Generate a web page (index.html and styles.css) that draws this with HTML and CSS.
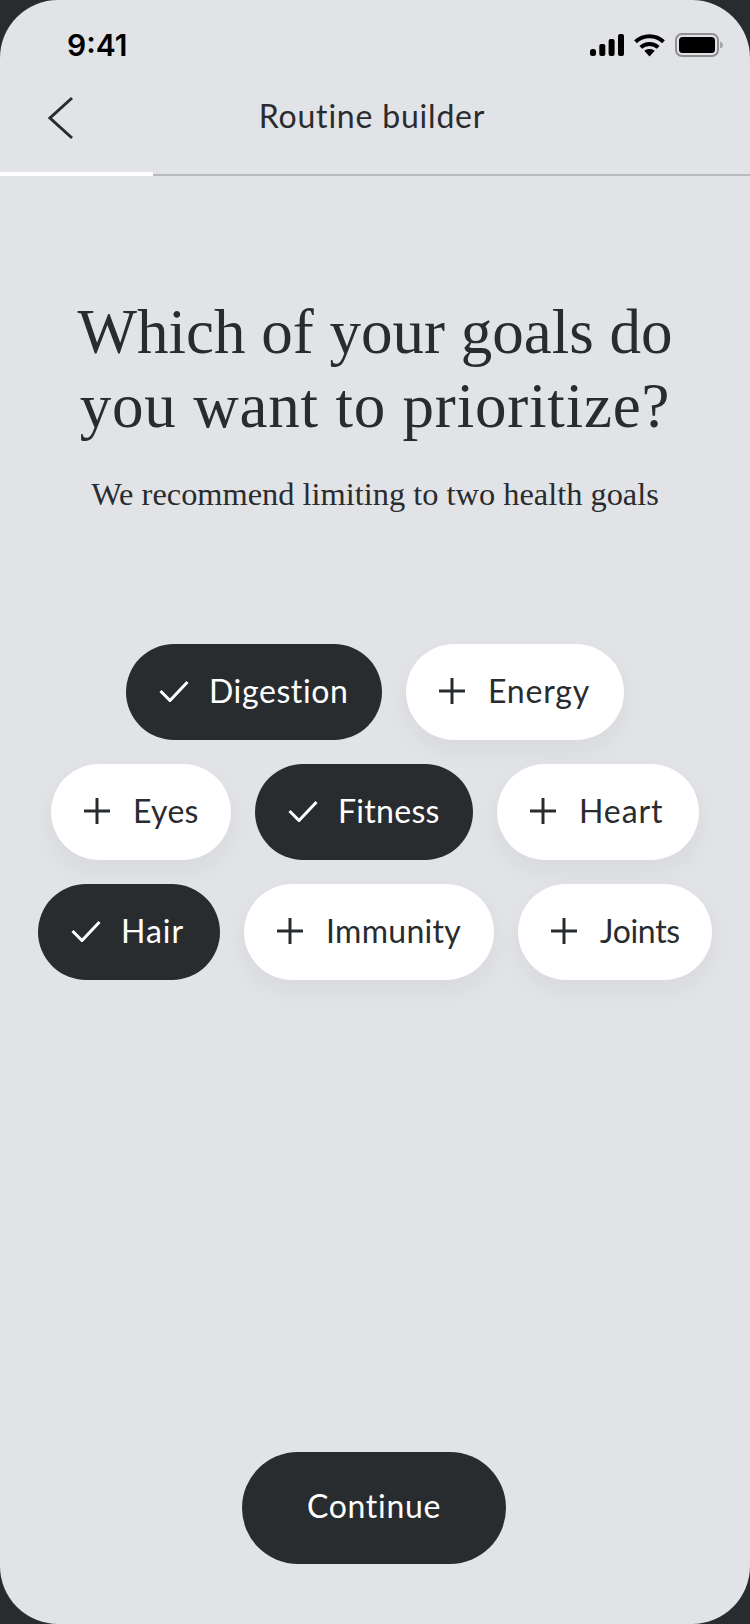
FILE: index.html
```html
<!DOCTYPE html>
<html lang="en">
<head>
  <meta charset="UTF-8" />
  <meta name="viewport" content="width=device-width, initial-scale=1.0" />
  <title>Routine builder</title>
  <link rel="stylesheet" href="styles.css">
</head>
<body>
  <div class="screen">
    <div class="status-bar">
      <span class="time">9:41</span>
      <div class="status-icons">
        <svg class="signal" width="34" height="22" viewBox="0 0 34 22">
          <rect x="0" y="15" width="6" height="7" rx="2.500" />
          <rect x="9.300" y="10" width="6" height="12" rx="2" />
          <rect x="18.600" y="5" width="6" height="17" rx="2" />
          <rect x="28" y="0" width="6" height="22" rx="2" />
        </svg>
        <svg class="wifi" width="31" height="24" viewBox="0 0 31 24">
          <path d="M15.500 23.500 10.300 17.800C13.100 15.400 17.900 15.400 20.700 17.800Z" />
          <path d="M1.500 8.800C9.300 1.400 21.700 1.400 29.500 8.800" fill="none" stroke="#000" stroke-width="4" />
          <path d="M6.800 14.400C11.600 9.800 19.400 9.800 24.200 14.400" fill="none" stroke="#000" stroke-width="4" />
        </svg>
        <svg class="battery" width="48" height="24" viewBox="0 0 48 24">
          <rect x="1" y="1" width="42" height="22" rx="6" fill="none" stroke="#8e8f92" stroke-width="2" />
          <rect x="4" y="4" width="36" height="16" rx="3.500" />
          <path d="M45 8.500C47 9 48 10.500 48 12S47 15 45 15.500Z" fill="#a5a6a9" />
        </svg>
      </div>
    </div>

    <header class="nav">
      <svg class="back" width="26" height="44" viewBox="0 0 26 44">
        <path d="M24 2 2 22 24 42" />
      </svg>
      <h1 class="nav-title">Routine builder</h1>
    </header>
    <div class="progress"><div class="progress-fill"></div></div>

    <main class="content">
      <h2 class="question">Which of your goals do<br><span class="question-end">you want to prioritize?</span></h2>
      <p class="hint">We recommend limiting to two health goals</p>

      <div class="goals">
        <div class="goal-row">
          <button class="pill on digestion"><svg class="tick" viewBox="0 0 30 22"><path d="M1.500 11 11 20.500 28.500 2" /></svg>Digestion</button>
          <button class="pill energy"><svg class="plus" viewBox="0 0 26 26"><path d="M13 0V26M0 13H26" /></svg>Energy</button>
        </div>
        <div class="goal-row">
          <button class="pill eyes"><svg class="plus" viewBox="0 0 26 26"><path d="M13 0V26M0 13H26" /></svg>Eyes</button>
          <button class="pill on fitness"><svg class="tick" viewBox="0 0 30 22"><path d="M1.500 11 11 20.500 28.500 2" /></svg>Fitness</button>
          <button class="pill heart"><svg class="plus" viewBox="0 0 26 26"><path d="M13 0V26M0 13H26" /></svg>Heart</button>
        </div>
        <div class="goal-row">
          <button class="pill on hair"><svg class="tick" viewBox="0 0 30 22"><path d="M1.500 11 11 20.500 28.500 2" /></svg>Hair</button>
          <button class="pill immunity"><svg class="plus" viewBox="0 0 26 26"><path d="M13 0V26M0 13H26" /></svg>Immunity</button>
          <button class="pill joints"><svg class="plus" viewBox="0 0 26 26"><path d="M13 0V26M0 13H26" /></svg>Joints</button>
        </div>
      </div>
    </main>

    <div class="footer">
      <button class="continue">Continue</button>
    </div>
  </div>
</body>
</html>
```

FILE: styles.css
```css
html, body {
  margin: 0;
  padding: 0;
  background-color: #292c2f;
}

body {
  width: 750px;
  height: 1624px;
  overflow: hidden;
  font-family: "Lato", "Noto Sans", sans-serif;
  color: #292c2f;
}

.screen {
  width: 750px;
  height: 1624px;
  display: flex;
  flex-direction: column;
  background-color: #e2e3e7;
  border-radius: 58px;
  overflow: hidden;
}

.status-bar {
  height: 90px;
  flex: none;
  display: flex;
  justify-content: space-between;
  align-items: center;
  box-sizing: border-box;
  padding: 0 27px 0 67px;
}

.time {
  font-family: "Inter", sans-serif;
  font-size: 30px;
  font-weight: 600;
  color: #000;
}

.status-icons {
  display: flex;
  align-items: center;
  gap: 10px;
}

.status-icons svg {
  display: block;
  fill: #000;
}

.nav {
  height: 84px;
  flex: none;
  box-sizing: border-box;
  padding: 0 6px 33px 0;
  position: relative;
  display: flex;
  align-items: center;
  justify-content: center;
}

.back {
  position: absolute;
  left: 48px;
  top: 6px;
  fill: none;
  stroke: #292c2f;
  stroke-width: 3;
}

.nav-title {
  margin: 0;
  font-size: 32px;
  font-weight: 400;
  letter-spacing: 0.8px;
  color: #292c2f;
}

.progress {
  height: 2px;
  flex: none;
  background-color: #b9babf;
  position: relative;
}

.progress-fill {
  position: absolute;
  left: 0;
  top: -2px;
  width: 153px;
  height: 4px;
  background-color: #fff;
}

.content {
  flex: 1;
  text-align: center;
}

.question {
  margin: 119px 0 0;
  font-family: "Liberation Serif", serif;
  font-size: 63px;
  font-weight: 400;
  line-height: 74px;
  color: #292c2f;
}

.question-end {
  letter-spacing: 0.8px;
}

.hint {
  margin: 31px 0 0;
  font-family: "Liberation Serif", serif;
  font-size: 32.400px;
  line-height: 40px;
  color: #292c2f;
}

.goals {
  margin-top: 130px;
  display: flex;
  flex-direction: column;
  gap: 24px;
}

.goal-row {
  display: flex;
  justify-content: center;
  gap: 24px;
}

.pill {
  height: 96px;
  box-sizing: border-box;
  padding: 0 0 3px 33px;
  display: flex;
  align-items: center;
  border: 0;
  border-radius: 48px;
  font-family: inherit;
  font-size: 32px;
  letter-spacing: 0.3px;
  background-color: #fff;
  color: #292c2f;
  box-shadow: 0 10px 24px rgba(41, 44, 47, 0.05);
}

.pill.on {
  background-color: #292c2f;
  color: #fff;
  box-shadow: none;
}

.digestion { width: 256px; letter-spacing: 0.6px; }
.energy { width: 218px; letter-spacing: 0.8px; }
.eyes { width: 180px; }
.fitness { width: 218px; }
.heart { width: 202px; letter-spacing: 0.9px; }
.hair { width: 182px; letter-spacing: 1px; }
.immunity { width: 250px; }
.joints { width: 194px; letter-spacing: -0.3px; }

.plus {
  width: 26px;
  height: 26px;
  margin: 0 23px 0 0;
  fill: none;
  stroke: #292c2f;
  stroke-width: 3;
}

.tick {
  width: 30px;
  height: 22px;
  margin: 0 20px 0 0;
  fill: none;
  stroke: #fff;
  stroke-width: 3;
}

.footer {
  flex: none;
  display: flex;
  justify-content: center;
  padding: 0 2px 60px 0;
}

.continue {
  width: 264px;
  height: 112px;
  padding: 0 0 6px;
  border: 0;
  border-radius: 56px;
  background-color: #292c2f;
  color: #fff;
  font-family: inherit;
  font-size: 32px;
  letter-spacing: 0.7px;
}
```
